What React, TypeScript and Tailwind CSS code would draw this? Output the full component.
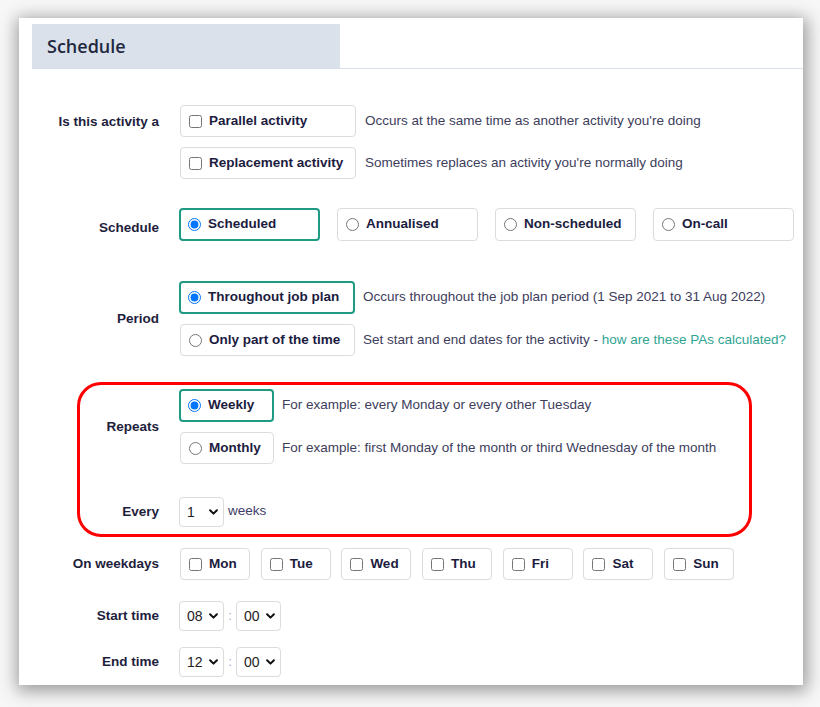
import React from "react";

const labelCls =
  "w-[140px] shrink-0 text-right text-[13.5px] font-bold text-[#1e1e3c]";
const descCls = "text-[13.5px] text-[#3d3d5c]";

function Chevron() {
  return (
    <svg
      className="pointer-events-none absolute right-[6px] top-1/2 -translate-y-1/2"
      width="9"
      height="6"
      viewBox="0 0 9 6"
      fill="none"
    >
      <path d="M1.1 1.2 L4.5 4.6 L7.9 1.2" stroke="#111" strokeWidth="2" strokeLinecap="round" strokeLinejoin="round" />
    </svg>
  );
}

function Select({ value, options }: { value: string; options: string[] }) {
  return (
    <div className="relative h-[30px] w-[45px]">
      <select
        defaultValue={value}
        className="h-full w-full appearance-none rounded-[4px] border border-[#dcdcdc] bg-white pl-[7px] text-[14px] text-[#222] outline-none"
      >
        {options.map((o) => (
          <option key={o}>{o}</option>
        ))}
      </select>
      <Chevron />
    </div>
  );
}

function OptionBox({
  type,
  label,
  selected = false,
  className = "",
  name,
}: {
  type: "radio" | "checkbox";
  label: string;
  selected?: boolean;
  className?: string;
  name?: string;
}) {
  return (
    <label
      className={
        "flex h-[33px] shrink-0 cursor-pointer items-center gap-[7px] rounded-[4px] bg-white text-[13.5px] font-bold text-[#1c1c40] " +
        (selected ? "border-2 border-[#1f9a83] pl-[7px]" : "border border-[#dcdcdc] pl-[8px]") +
        " " +
        className
      }
    >
      <input
        type={type}
        name={name}
        defaultChecked={selected}
        className="m-0 h-[13px] w-[13px] shrink-0"
      />
      <span>{label}</span>
    </label>
  );
}

export default function App() {
  const days = ["Mon", "Tue", "Wed", "Thu", "Fri", "Sat", "Sun"];
  const hours = ["00", "01", "02", "03", "04", "05", "06", "07", "08", "09", "10", "11", "12"];
  const mins = ["00", "15", "30", "45"];

  return (
    <div
      className="h-[707px] w-[820px] overflow-hidden bg-[#f7f7f7] pl-[19px] pt-[18px]"
      style={{ fontFamily: '"Liberation Sans", Arial, sans-serif' }}
    >
      <div className="h-[667px] w-[784px] bg-white pt-[6px] shadow-[1px_3px_16px_3px_rgba(0,0,0,0.38)]">
        {/* header */}
        <div className="ml-[13px] border-b border-[#d8dfe9]">
          <div className="flex h-[44px] w-[308px] items-center bg-[#dae1ea] pl-[15px]">
            <h2
              className="text-[18px] font-semibold text-[#1f2740]"
              style={{ fontFamily: '"Open Sans", sans-serif' }}
            >
              Schedule
            </h2>
          </div>
        </div>

        {/* activity type */}
        <div className="mt-[36px] flex gap-[20px]">
          <div className={labelCls + " leading-[33px]"}>Is this activity a</div>
          <div className="flex flex-col gap-[10px]">
            <div className="flex items-center gap-[9px]">
              <OptionBox type="checkbox" label="Parallel activity" className="ml-[1px] w-[176px] !h-[32px]" />
              <span className={descCls}>Occurs at the same time as another activity you're doing</span>
            </div>
            <div className="flex items-center gap-[9px]">
              <OptionBox type="checkbox" label="Replacement activity" className="ml-[1px] w-[176px] !h-[32px]" />
              <span className={descCls}>Sometimes replaces an activity you're normally doing</span>
            </div>
          </div>
        </div>

        {/* schedule */}
        <div className="mt-[29px] flex items-center gap-[20px]">
          <div className={labelCls + " pt-[8px]"}>Schedule</div>
          <div className="flex gap-[17px]">
            <OptionBox type="radio" name="sched" label="Scheduled" selected className="w-[141px]" />
            <OptionBox type="radio" name="sched" label="Annualised" className="w-[141px]" />
            <OptionBox type="radio" name="sched" label="Non-scheduled" className="w-[141px]" />
            <OptionBox type="radio" name="sched" label="On-call" className="w-[141px]" />
          </div>
        </div>

        {/* period */}
        <div className="mt-[40px] flex items-center gap-[20px]">
          <div className={labelCls + " pt-[2px]"}>Period</div>
          <div className="flex flex-col gap-[10px]">
            <div className="flex items-center gap-[8px]">
              <OptionBox type="radio" name="period" label="Throughout job plan" selected className="w-[176px]" />
              <span className={descCls}>Occurs throughout the job plan period (1 Sep 2021 to 31 Aug 2022)</span>
            </div>
            <div className="flex items-center gap-[8px]">
              <OptionBox type="radio" name="period" label="Only part of the time" className="ml-[1px] w-[175px] !h-[32px]" />
              <span className={descCls}>
                Set start and end dates for the activity -{" "}
                <a className="text-[#2fa493]">how are these PAs calculated?</a>
              </span>
            </div>
          </div>
        </div>

        {/* repeats (highlighted) */}
        <div className="relative mt-[26px] pb-[10px] pt-[7px]">
          <div className="pointer-events-none absolute bottom-0 left-[58px] top-0 w-[675px] rounded-[24px] border-[3px] border-[#ff0000]" />
          <div className="flex items-center gap-[20px]">
            <div className={labelCls + " pt-[2px]"}>Repeats</div>
            <div className="flex flex-col gap-[10px]">
              <div className="flex items-center gap-[8px]">
                <OptionBox type="radio" name="rep" label="Weekly" selected className="w-[95px]" />
                <span className={descCls}>For example: every Monday or every other Tuesday</span>
              </div>
              <div className="flex items-center gap-[8px]">
                <OptionBox type="radio" name="rep" label="Monthly" className="ml-[1px] w-[94px] !h-[32px]" />
                <span className={descCls}>For example: first Monday of the month or third Wednesday of the month</span>
              </div>
            </div>
          </div>
          <div className="mt-[33px] flex items-center gap-[20px]">
            <div className={labelCls}>Every</div>
            <div className="flex items-center gap-[4px]">
              <Select value="1" options={["1", "2", "3", "4"]} />
              <span className="pb-[2px] text-[13.5px] text-[#3d3d6a]">weeks</span>
            </div>
          </div>
        </div>

        {/* weekdays */}
        <div className="mt-[11px] flex items-center gap-[20px]">
          <div className={labelCls}>On weekdays</div>
          <div className="ml-[1px] flex gap-[10.7px]">
            {days.map((d) => (
              <OptionBox key={d} type="checkbox" label={d} className="w-[70px] !h-[32px]" />
            ))}
          </div>
        </div>

        {/* times */}
        <div className="mt-[21px] flex items-center gap-[20px]">
          <div className={labelCls}>Start time</div>
          <div className="flex items-center gap-[4px]">
            <Select value="08" options={hours} />
            <span className="w-[4px] text-center text-[13px] text-[#9aa8c8]">:</span>
            <Select value="00" options={mins} />
          </div>
        </div>
        <div className="mt-[16px] flex items-center gap-[20px]">
          <div className={labelCls}>End time</div>
          <div className="flex items-center gap-[4px]">
            <Select value="12" options={hours} />
            <span className="w-[4px] text-center text-[13px] text-[#9aa8c8]">:</span>
            <Select value="00" options={mins} />
          </div>
        </div>
      </div>
    </div>
  );
}
